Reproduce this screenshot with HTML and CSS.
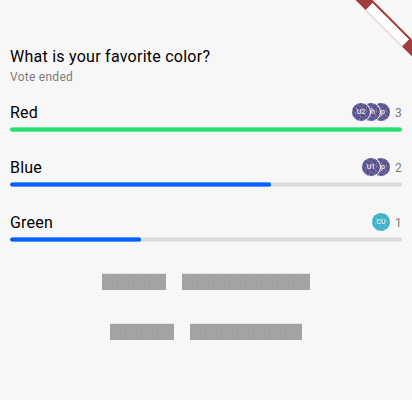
FILE: index.html
```html
<!DOCTYPE html>
<html lang="en">
<head>
<meta charset="utf-8">
<title>Poll</title>
<link rel="stylesheet" href="styles.css">
</head>
<body>
<main class="poll">
  <header class="heading">
    <h1>What is your favorite color?</h1>
    <p>Vote ended</p>
  </header>
  <section class="option">
    <div class="row"><span class="name">Red</span>
      <div class="voters"><span class="avatar">U2</span><span class="avatar tail">h</span><span class="avatar tail">p</span></div>
      <span class="count">3</span></div>
    <div class="track"><div class="fill winner" style="width:100%"></div></div>
  </section>
  <section class="option">
    <div class="row"><span class="name">Blue</span>
      <div class="voters"><span class="avatar">U1</span><span class="avatar tail">p</span></div>
      <span class="count">2</span></div>
    <div class="track"><div class="fill" style="width:66.67%"></div></div>
  </section>
  <section class="option">
    <div class="row"><span class="name">Green</span>
      <div class="voters"><span class="avatar teal">CU</span></div>
      <span class="count">1</span></div>
    <div class="track"><div class="fill" style="width:33.33%"></div></div>
  </section>
  <div class="actions">
    <div class="action"><i class="word four"></i><i class="word eight"></i></div>
    <div class="action"><i class="word four"></i><i class="word seven"></i></div>
  </div>
</main>
<svg class="ribbon" width="72" height="70" viewBox="340 0 72 70">
  <path d="M355.5 0H372.5L412 39.5V56.5Z" fill="#a23c3f"/>
  <path d="M365.5 10L372.7 2.8L409.2 39.3L402 46.5Z" fill="#fff"/>
  <path d="M373 2.2L409.6 38.8" stroke="#a23c3f" stroke-width="1.4"/>
  <path d="M366 10.5L402 46.5" stroke="#e3c6c8" stroke-width="1"/>
  <path d="M381.8 23.5l6-6M390.8 32.5l6-6" stroke="#faf0f0" stroke-width=".8"/>
</svg>
</body>
</html>
```
FILE: styles.css
```css
* { box-sizing: border-box; }
body { margin: 0; height: 400px; overflow: hidden; background: #f7f7f7; font-family: Roboto, sans-serif; color: #000; }
.poll { padding: 47px 10px 0; }
.heading { height: 54px; }
h1 { margin: 0; font-size: 16px; line-height: 20px; font-weight: 400; letter-spacing: .25px; }
.heading p { margin: 2px 0 0; font-size: 12px; line-height: 16px; color: #7c7c7c; letter-spacing: .27px; }
.option { height: 55px; }
.row { display: flex; align-items: center; height: 23px; }
.name { flex: 1; font-size: 16px; line-height: 20px; letter-spacing: .2px; }
.voters { display: flex; margin-top: -1px; }
.avatar { width: 20px; height: 20px; border: 1px solid #fff; border-radius: 50%; position: relative; z-index: 3; color: #f0eef8; font-size: 7px; font-weight: 500; line-height: 18px; text-align: center;
  background: repeating-linear-gradient(35deg, #ffffff20 0 1px, transparent 1px 4px), repeating-linear-gradient(100deg, #ffffff20 0 1px, transparent 1px 5px), #57518f; }
.avatar + .avatar { margin-left: -10px; z-index: 2; }
.avatar + .avatar + .avatar { z-index: 1; }
.tail { padding-left: 4px; }
.teal { color: #d8f2f6; background-color: #3aafc9; }
.count { margin-left: 4px; width: 7px; font-size: 12px; line-height: 16px; color: #7c7c7c; }
.track { margin-top: 3px; border-radius: 3px; background: linear-gradient(#dbdbdb99 1px, #dbdbdb 1px 4px, #dbdbdb99 4px); overflow: hidden; height: 5px; }
.fill { height: 100%; border-radius: 3px; background: linear-gradient(#005fff99 1px, #005fff 1px 4px, #005fff99 4px); }
.winner { background: linear-gradient(#20e07099 1px, #20e070 1px 4px, #20e07099 4px); }
.actions { padding-top: 7px; display: flex; flex-direction: column; gap: 33px; }
.action { display: flex; justify-content: center; gap: 16px; }
.word { height: 17px; border-top: 1px solid #e6e6e6; background: linear-gradient(#a3a3a5, #a3a3a5) right / 2px 100% no-repeat padding-box, repeating-linear-gradient(90deg, #a3a3a5 0 15px, #9d9d9f 15px 16px) padding-box; }
.four { width: 64px; }
.seven { width: 112px; }
.eight { width: 128px; }
.ribbon { position: absolute; top: 0; right: 0; }
```
